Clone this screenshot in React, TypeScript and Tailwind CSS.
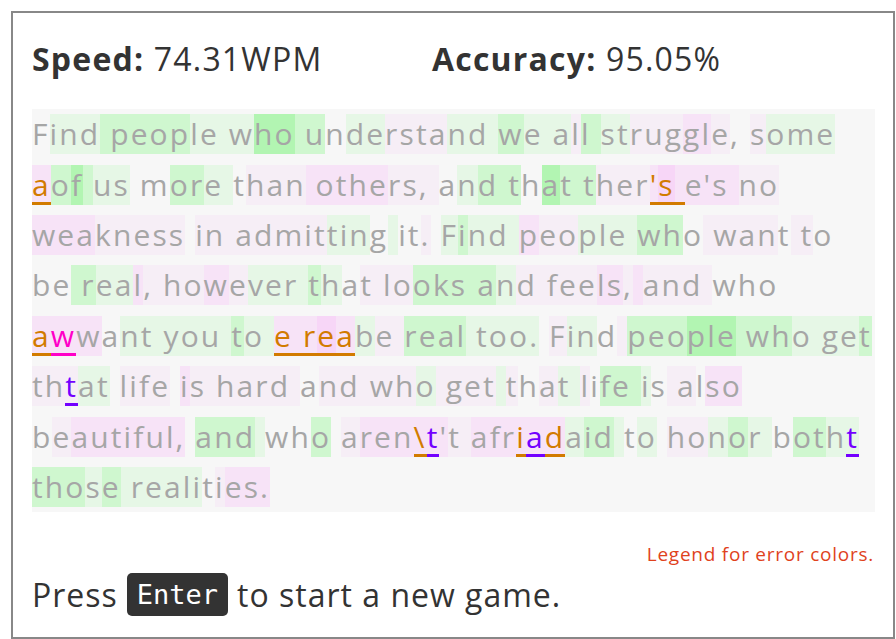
import React from 'react'

type Seg = { t: string; c: string; err?: string }

// highlight shades, one code per character
const shades: Record<string, string> = {
  '.': 'bg-transparent',
  g: 'bg-[#e6f7e6]',
  G: 'bg-[#cff7cf]',
  H: 'bg-[#b2f5b2]',
  p: 'bg-[#f6eef6]',
  P: 'bg-[#f7e3f7]',
  Q: 'bg-[#f7d6f7]',
}

const errColors: Record<string, string> = {
  o: 'text-[#d27b00] shadow-[inset_0_-3px_0_#d27b00]',
  m: 'text-[#ff00c8] shadow-[inset_0_-3px_0_#ff00c8]',
  v: 'text-[#7300ff] shadow-[inset_0_-3px_0_#7300ff]',
}

const lines: Seg[][] = [
  [{ t: 'Find people who understand we all struggle, some', c: '.gggGGGGGggggHHGG.ggppppgggGgggpGGggpppPPp..pgggg' }],
  [
    { t: 'a', c: 'P', err: 'o' },
    { t: 'of us more than others, and that ther', c: 'GHGgg..GGgg.pppPPPPPpppp.gGGG.HGGGpppp' },
    { t: "'s ", c: 'PQP', err: 'o' },
    { t: "e's no", c: 'PPPPpp' },
  ],
  [{ t: 'weakness in admitting it. Find people who want to', c: 'PPPppppp.ppppppppggg.g..p.gGgggPppggggGG.pppp.pp' }],
  [{ t: 'be real, however that looks and feels, and who', c: '..GGggPppppPpggggGg.ppppGGGGGgpppppPPpPpppp' }],
  [
    { t: 'a', c: 'P', err: 'o' },
    { t: 'w', c: 'P', err: 'm' },
    { t: 'want you to ', c: 'P.gggggggGgg' },
    { t: 'e rea', c: 'PPPQP', err: 'o' },
    { t: 'be real too. Find people who get', c: 'gppGGGGggggg.pgg.pGGGHHHGGGggggG' },
  ],
  [
    { t: 'th', c: 'pp' },
    { t: 't', c: 'p', err: 'v' },
    { t: 'at life is hard and who get that life is also', c: 'gg.pppp.Pppppppp.pppppgppppgp.pggplGGGg.pp.PPPP' },
  ],
  [
    { t: 'beautiful, and who aren', c: '.pPPPPPPPP.GGGg..G.pPPP' },
    { t: '\\', c: 'P', err: 'o' },
    { t: 't', c: 'P', err: 'v' },
    { t: "'t afr", c: 'PppPPP' },
    { t: 'i', c: 'P', err: 'o' },
    { t: 'a', c: 'P', err: 'v' },
    { t: 'd', c: 'P', err: 'o' },
    { t: 'aid to honor both', c: 'gGGg.g.ppgGgg.GGg' },
    { t: 't', c: 'g', err: 'v' },
  ],
  [{ t: 'those realities.', c: 'GGGgGgggggg.pPPP.' }],
]

function Line({ segs }: { segs: Seg[] }) {
  return (
    <div className="flex h-[50.4px] items-center whitespace-pre">
      {segs.map((s, i) =>
        s.t.split('').map((ch, j) => (
          <span
            key={`${i}-${j}`}
            className={`inline-block h-[40px] leading-[40px] ${shades[s.c[j] ?? '.'] ?? ''} ${s.err ? errColors[s.err] : ''}`}
          >
            {ch}
          </span>
        )),
      )}
    </div>
  )
}

export default function App() {
  return (
    <div className="min-h-screen bg-white pl-[11px] pt-[11px] font-['Open_Sans',sans-serif]">
      <div className="flex h-[628px] w-[884px] flex-col border-2 border-[#888888] px-[19px] pt-[24px]">
        {/* Stats */}
        <div className="flex text-[32px] leading-[44px] tracking-[1.2px] text-[#333333]">
          <div className="w-[400px]">
            <span className="font-bold">Speed:</span> 74.31WPM
          </div>
          <div>
            <span className="font-bold">Accuracy:</span> 95.05%
          </div>
        </div>

        {/* Typed text */}
        <div className="mt-[28px] w-[843px] bg-[#f7f7f7] text-[30px] tracking-[2.1px] text-[#a6a6a6]">
          {lines.map((l, i) => (
            <Line key={i} segs={l} />
          ))}
        </div>

        <div className="mt-[28px] text-right text-[19px] tracking-[0.75px] text-[#e0421c]">Legend for error colors.</div>

        <div className="mt-[2px] flex items-center text-[32px] tracking-[1px] text-[#333333]">
          Press
          <kbd className="mx-[9px] rounded-[5px] bg-[#333333] px-[10px] font-['DejaVu_Sans_Mono',monospace] text-[27px] leading-[43px] tracking-normal text-white">
            Enter
          </kbd>
          to start a new game.
        </div>
      </div>
    </div>
  )
}
